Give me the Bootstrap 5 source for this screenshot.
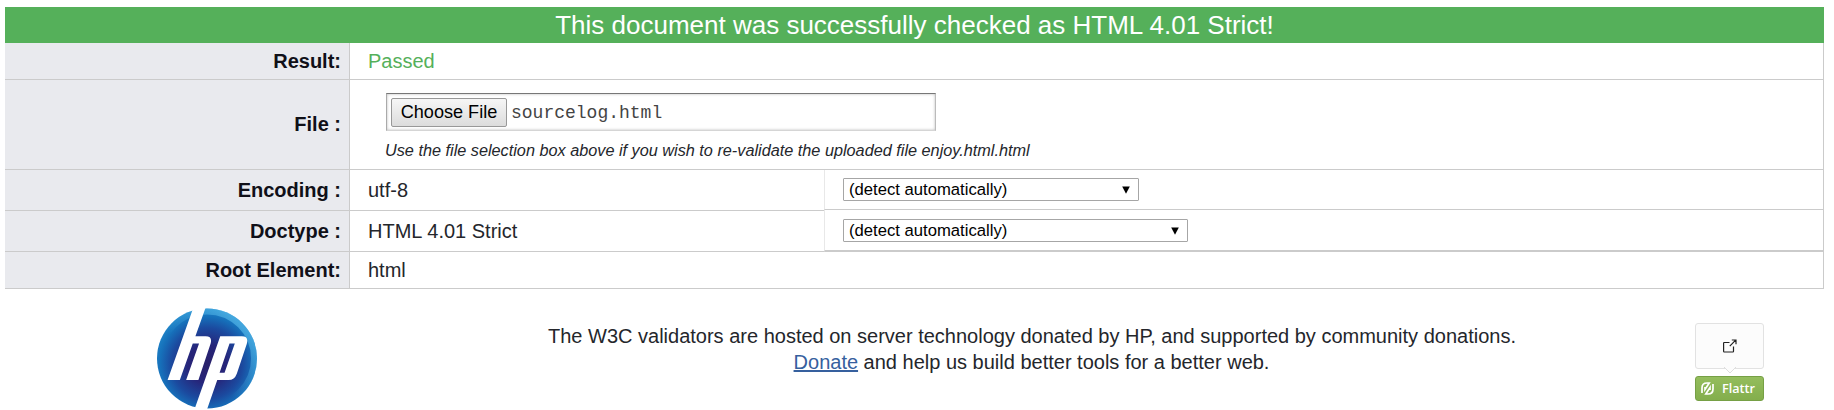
<!DOCTYPE html>
<html lang="en">
<head>
<meta charset="utf-8">
<title>Markup Validation Result</title>
<link href="https://cdn.jsdelivr.net/npm/bootstrap@5.3.0/dist/css/bootstrap.min.css" rel="stylesheet">
<style>
body{font-family:"Liberation Sans",Arial,sans-serif;font-size:20px;line-height:26px;color:#24262b;background:#fff;overflow:hidden}
.results{margin:7px 10px 0 5px}
.banner{height:36px;line-height:36px;font-size:26px;background:#55b05a;color:#fff}
.grid-body{border-right:1px solid #cbcbcb}
.line{border-bottom:1px solid #cbcbcb}
.r-sm{height:37px}
.r-file{height:90px}
.r-md{height:41px}
.lbl{width:345px;background:#e9eaee;border-right:1px solid #cbcbcb;color:#101018;padding-right:8px;font-weight:700}
.lbl-file{padding-bottom:2px}
.val{padding-left:18px}
.passed{color:#55b05a}
.val-mid{width:474px}
.opt{border-left:1px solid #e8e8e8;padding:8px 0 0 18px}
.opt-a{height:40px;border-bottom:1px solid #cbcbcb}
.opt-b{height:42px;padding-top:9px;margin-bottom:-1px;border-bottom:2px solid #cbcbcb}
.picker{height:23px;border:1px solid #a6a6a6;border-radius:1px;color:#000;font-size:16.67px;line-height:21px;padding:0 8px 0 5px}
.p-a{width:296px}.p-b{width:345px}
.filebox{width:550px;height:38px;border:1px solid #bbb;border-top-color:#777;border-left-color:#aaa;border-bottom:1px solid #d5d5d5;box-shadow:inset 0 0 3px #bbb;padding:4px}
.choose{width:116px;height:29px;border:1px solid #989898;border-radius:2px;background:linear-gradient(#f6f6f6,#dcdcdc);color:#000;font-size:18.1px;line-height:26px}
.fname{font-family:"Liberation Mono",monospace;font-size:18px;padding-left:4px;padding-top:2px;color:#444}
.file-cell{padding:13px 0 0 36px}
.hint{font-size:16.25px;font-style:italic;line-height:20px;margin:9px 0 0 -1px}
.foot{height:121px}
.logo{margin:19px 0 0 157px;width:100px;height:101px}
.note{margin:34px 0 0 291px;width:967px;white-space:nowrap}
.note a{color:#36609e}
.flattr{margin:34px 0 0 180px;width:69px}
.bubble{height:46px;border:1px solid #e2e2e2;border-radius:3px;background:#fcfcfc}
.tip{bottom:-6px;left:28px}
.fl-btn{margin-top:7px;height:25px;border:1px solid #76a045;border-radius:3px;background:linear-gradient(#94bd5d,#83ae4c);color:#fff;font:600 12.6px/23px "Open Sans",sans-serif;padding-left:5px;gap:8px}
</style>
</head>
<body>
<main>
<section class="results">
  <div class="banner text-center">This document was successfully checked as HTML 4.01 Strict!</div>
  <div class="grid-body">
    <div class="d-flex r-sm line"><div class="lbl d-flex align-items-center justify-content-end">Result:</div><div class="val passed d-flex align-items-center">Passed</div></div>
    <div class="d-flex r-file line"><div class="lbl lbl-file d-flex align-items-center justify-content-end">File :</div>
      <div class="file-cell">
        <div class="filebox d-flex"><div class="choose text-center">Choose File</div><div class="fname">sourcelog.html</div></div>
        <div class="hint">Use the file selection box above if you wish to re-validate the uploaded file enjoy.html.html</div>
      </div></div>
    <div class="d-flex">
      <div>
        <div class="d-flex r-md line"><div class="lbl d-flex align-items-center justify-content-end">Encoding :</div><div class="val val-mid d-flex align-items-center">utf-8</div></div>
        <div class="d-flex r-md line"><div class="lbl d-flex align-items-center justify-content-end">Doctype :</div><div class="val val-mid d-flex align-items-center">HTML 4.01 Strict</div></div>
      </div>
      <div class="flex-grow-1">
        <div class="opt opt-a"><div class="picker p-a d-flex align-items-center justify-content-between">(detect automatically)<svg width="8" height="8"><path d="M.2.5h7.6L4 7.8z"/></svg></div></div>
        <div class="opt opt-b"><div class="picker p-b d-flex align-items-center justify-content-between">(detect automatically)<svg width="8" height="8"><path d="M.2.5h7.6L4 7.8z"/></svg></div></div>
      </div>
    </div>
    <div class="d-flex r-sm line"><div class="lbl d-flex align-items-center justify-content-end">Root Element:</div><div class="val d-flex align-items-center">html</div></div>
  </div>
</section>
<footer class="foot d-flex">
  <svg class="logo flex-shrink-0" viewBox="50 55 302 304">
    <defs>
      <radialGradient id="orb" cx=".5" cy=".55" r=".55"><stop offset="0" stop-color="#29206a"/><stop offset=".35" stop-color="#26257a"/><stop offset=".65" stop-color="#1b4a9f"/><stop offset=".85" stop-color="#1670ba"/><stop offset="1" stop-color="#1f86ca"/></radialGradient>
      <linearGradient id="glow" x1=".2" y1=".8" x2=".85" y2=".15"><stop offset=".35" stop-color="#5cc0ee" stop-opacity="0"/><stop offset="1" stop-color="#5cc0ee" stop-opacity=".6"/></linearGradient>
    </defs>
    <circle cx="201" cy="207" r="151" fill="url(#orb)"/>
    <circle cx="201" cy="207" r="142" fill="none" stroke="url(#glow)" stroke-width="18"/>
    <path fill="#fff" d="M161 50H198L166 140H197Q218 140 212 162L175 272H138L177 162H158L119 272H82Z"/>
    <path fill="#fff" fill-rule="evenodd" d="M241 140H306Q328 140 321 163L291 253Q284 272 266 272H232L201 361H163ZM269 162L239 250H254L285 162Z"/>
  </svg>
  <div class="note text-center">The W3C validators are hosted on server technology donated by HP, and supported by community donations.<br><a href="#">Donate</a> and help us build better tools for a better web.</div>
  <div class="flattr flex-shrink-0">
    <div class="bubble position-relative d-flex align-items-center justify-content-center">
      <svg width="14" height="14" viewBox="0 0 14 14" fill="none" stroke="#222" stroke-width="1.2"><path d="M6.5 3.5H1.2Q.6 3.5.6 4.1V12.3Q.6 13 1.2 13H9.9Q10.5 13 10.5 12.3V7.5M6.8 7.2L12.4 1.4M8.8 1H13V5.2"/></svg>
      <svg class="tip position-absolute" width="12" height="7"><path d="M0 0L6 6L12 0" fill="#fcfcfc" stroke="#dedede"/></svg>
    </div>
    <div class="fl-btn d-flex align-items-center">
      <svg width="13" height="13" viewBox="0 0 13 13" fill="none" stroke="#fff" stroke-width="1.7"><path d="M1 11V6Q1 1 6 1H8.2L4 7.4V5M12 2V7Q12 12 7 12H4.8L9 5.6V8"/></svg>
      <span>Flattr</span>
    </div>
  </div>
</footer>
</main>
<script src="https://cdn.jsdelivr.net/npm/bootstrap@5.3.0/dist/js/bootstrap.bundle.min.js"></script>
</body>
</html>
